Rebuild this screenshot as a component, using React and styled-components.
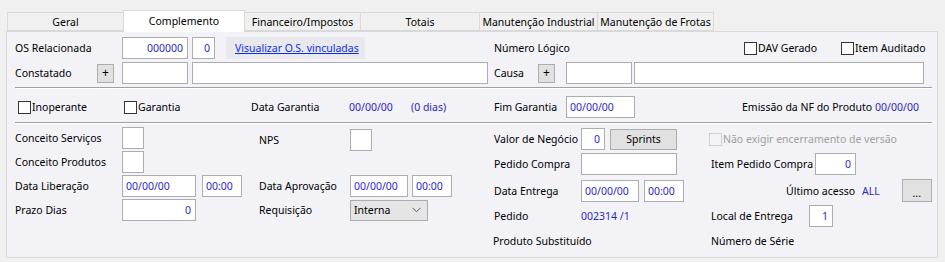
import styled, { createGlobalStyle } from 'styled-components'

const GlobalStyle = createGlobalStyle`
  body {
    margin: 0;
    background: #f0f0f0;
    font-family: 'Noto Sans', 'DejaVu Sans', sans-serif;
    font-size: 10.5px;
    color: #000;
  }
`

const StWindow = styled.div`
  width: 945px;
  height: 262px;
  box-sizing: border-box;
  padding: 10px 7px 4px 6px;
`

const StTabBar = styled.div`
  display: flex;
  align-items: flex-end;
  height: 21px;
  padding-left: 2px;
  position: relative;
  z-index: 1;
`

const StTab = styled.div`
  width: ${(p) => p.$w}px;
  height: ${(p) => (p.$active ? 22 : 19)}px;
  box-sizing: border-box;
  display: flex;
  align-items: center;
  justify-content: center;
  background: ${(p) => (p.$active ? '#fff' : '#f0f0f0')};
  border: 1px solid #d9d9d9;
  border-bottom: ${(p) => (p.$active ? 'none' : '1px solid #d9d9d9')};
  margin-left: -1px;
  margin-bottom: ${(p) => (p.$active ? -1 : 0)}px;
  padding-bottom: ${(p) => (p.$active ? 2 : 0)}px;
  white-space: nowrap;
`

const StPanel = styled.div`
  height: 227px;
  box-sizing: border-box;
  border: 1px solid #d9d9d9;
  background: #f2f2f7;
  padding: 5px 5px 0 8px;
`

const StRow = styled.div`
  display: flex;
  align-items: center;
  height: 22px;
  margin-top: ${(p) => p.$mt || 0}px;
`

const StHalf = styled.div`
  display: flex;
  align-items: center;
  width: ${(p) => (p.$w ? `${p.$w}px` : 'auto')};
  flex: ${(p) => (p.$w ? 'none' : 1)};
  height: 100%;
`

const StLabel = styled.span`
  display: inline-block;
  width: ${(p) => (p.$w ? `${p.$w}px` : 'auto')};
  flex: none;
  white-space: nowrap;
  color: #000;
  margin-left: ${(p) => p.$ml || 0}px;
`

const StValue = styled.span`
  display: inline-block;
  width: ${(p) => (p.$w ? `${p.$w}px` : 'auto')};
  flex: none;
  color: #2d1fc8;
  white-space: nowrap;
  margin-left: ${(p) => p.$ml || 0}px;
`

const StInput = styled.div`
  width: ${(p) => p.$w}px;
  height: ${(p) => p.$h || 22}px;
  box-sizing: border-box;
  flex: none;
  background: #fff;
  border: 1px solid #abadb3;
  color: #2d1fc8;
  display: flex;
  align-items: center;
  justify-content: ${(p) => (p.$right ? 'flex-end' : 'flex-start')};
  padding: 0 4px 0 3px;
  margin-left: ${(p) => p.$ml || 0}px;
  white-space: nowrap;
`

const StButton = styled.div`
  width: ${(p) => p.$w}px;
  height: ${(p) => p.$h || 21}px;
  box-sizing: border-box;
  flex: none;
  background: #e1e1e1;
  border: 1px solid #adadad;
  display: flex;
  align-items: ${(p) => (p.$low ? 'flex-end' : 'center')};
  justify-content: center;
  padding-bottom: ${(p) => (p.$low ? 3 : 0)}px;
  margin-left: ${(p) => p.$ml || 0}px;
  font-size: ${(p) => p.$fs || 10.5}px;
  line-height: 1;
`

const StLinkBox = styled.div`
  width: 139px;
  height: 22px;
  box-sizing: border-box;
  background: #e8e8ed;
  padding-left: 9px;
  display: flex;
  align-items: center;
  margin-left: 11px;
`

const StLink = styled.a`
  color: #0a2ee6;
  text-decoration: underline;
  white-space: nowrap;
`

const StCheck = styled.label`
  display: flex;
  align-items: center;
  white-space: nowrap;
  width: ${(p) => (p.$w ? `${p.$w}px` : 'auto')};
  flex: none;
  margin-left: ${(p) => p.$ml || 0}px;
  color: ${(p) => (p.$disabled ? '#a0a0a0' : '#000')};
`

const StBox = styled.span`
  width: 13px;
  height: 13px;
  box-sizing: border-box;
  border: 1px solid ${(p) => (p.$disabled ? '#cfcfcf' : '#333')};
  background: ${(p) => (p.$disabled ? '#f4f4f4' : '#fff')};
  margin-right: 1px;
`

const StSeparator = styled.div`
  border-top: 1px solid #a0a0a0;
  border-bottom: 1px solid #fff;
  margin: ${(p) => p.$my || 0}px 0;
`

const StGarantiaRow = styled.div`
  display: flex;
  align-items: center;
  height: 30px;
`

const StLower = styled.div`
  display: flex;
  padding-top: 3px;
`

const StLeftGrid = styled.div`
  width: 479px;
  flex: none;
  display: grid;
  grid-template-columns: 107px 137px 91px 1fr;
  grid-auto-rows: 24px;
  align-items: start;
`

const StCell = styled.div`
  display: flex;
  align-items: center;
  gap: ${(p) => p.$gap || 0}px;
  height: 22px;
  margin-top: ${(p) => p.$mt || 0}px;
`

const StRightCol = styled.div`
  flex: 1;
  display: flex;
  flex-direction: column;
`

const StRightRow = styled.div`
  display: flex;
  height: ${(p) => p.$h}px;
`

const StSelect = styled.div`
  width: 78px;
  height: 21px;
  box-sizing: border-box;
  background: #e5e5e5;
  border: 1px solid #acacac;
  display: flex;
  align-items: center;
  justify-content: space-between;
  padding: 0 6px 0 3px;
`

const tabs = [
  ['Geral', 117],
  ['Complemento', 122],
  ['Financeiro/Impostos', 117],
  ['Totais', 120],
  ['Manutenção Industrial', 119],
  ['Manutenção de Frotas', 117],
]

function Check({ children, disabled, ...rest }) {
  return (
    <StCheck $disabled={disabled} {...rest}>
      <StBox $disabled={disabled} />
      {children}
    </StCheck>
  )
}

export default function App() {
  return (
    <>
      <GlobalStyle />
      <StWindow>
        <StTabBar>
          {tabs.map(([name, w]) => (
            <StTab key={name} $w={w} $active={name === 'Complemento'}>
              {name}
            </StTab>
          ))}
        </StTabBar>
        <StPanel>
          <StRow>
            <StHalf $w={479}>
              <StLabel $w={107}>OS Relacionada</StLabel>
              <StInput $w={66} $right>000000</StInput>
              <StInput $w={23} $right $ml={4}>0</StInput>
              <StLinkBox>
                <StLink>Visualizar O.S. vinculadas</StLink>
              </StLinkBox>
            </StHalf>
            <StHalf>
              <StLabel $w={250}>Número Lógico</StLabel>
              <Check $w={97}>DAV Gerado</Check>
              <Check>Item Auditado</Check>
            </StHalf>
          </StRow>
          <StRow $mt={3}>
            <StHalf $w={479}>
              <StLabel $w={82}>Constatado</StLabel>
              <StButton $w={17} $h={19} $fs={12}>+</StButton>
              <StInput $w={66} $ml={8} />
              <StInput $w={296} $ml={4} />
            </StHalf>
            <StHalf>
              <StLabel $w={44}>Causa</StLabel>
              <StButton $w={17} $h={19} $fs={12}>+</StButton>
              <StInput $w={66} $ml={11} />
              <StInput $w={290} $ml={2} />
            </StHalf>
          </StRow>
          <StSeparator $my={3} />
          <StGarantiaRow>
            <Check $w={106} $ml={3}>Inoperante</Check>
            <Check $w={127}>Garantia</Check>
            <StLabel $w={98}>Data Garantia</StLabel>
            <StValue $w={62}>00/00/00</StValue>
            <StValue $w={83}>(0 dias)</StValue>
            <StLabel $w={72}>Fim Garantia</StLabel>
            <StInput $w={69}>00/00/00</StInput>
            <StLabel $ml={107}>Emissão da NF do Produto</StLabel>
            <StValue $ml={3}>00/00/00</StValue>
          </StGarantiaRow>
          <StSeparator />
          <StLower>
            <StLeftGrid>
              <StCell><StLabel>Conceito Serviços</StLabel></StCell>
              <StCell><StInput $w={22} /></StCell>
              <StCell $mt={2}><StLabel>NPS</StLabel></StCell>
              <StCell $mt={2}><StInput $w={22} /></StCell>

              <StCell><StLabel>Conceito Produtos</StLabel></StCell>
              <StCell><StInput $w={22} /></StCell>
              <StCell />
              <StCell />

              <StCell><StLabel>Data Liberação</StLabel></StCell>
              <StCell $gap={6}>
                <StInput $w={74}>00/00/00</StInput>
                <StInput $w={40}>00:00</StInput>
              </StCell>
              <StCell><StLabel>Data Aprovação</StLabel></StCell>
              <StCell $gap={4}>
                <StInput $w={58}>00/00/00</StInput>
                <StInput $w={40}>00:00</StInput>
              </StCell>

              <StCell><StLabel>Prazo Dias</StLabel></StCell>
              <StCell><StInput $w={74} $right>0</StInput></StCell>
              <StCell><StLabel>Requisição</StLabel></StCell>
              <StCell>
                <StSelect>
                  Interna
                  <svg width="9" height="6" viewBox="0 0 9 6">
                    <path d="M0.5 0.8 L4.5 4.8 L8.5 0.8" fill="none" stroke="#555" strokeWidth="1" />
                  </svg>
                </StSelect>
              </StCell>
            </StLeftGrid>
            <StRightCol>
              <StRightRow $h={24}>
                <StHalf $w={217}>
                  <StLabel $w={87}>Valor de Negócio</StLabel>
                  <StInput $w={24} $right>0</StInput>
                  <StButton $w={67} $ml={5}>Sprints</StButton>
                </StHalf>
                <StHalf>
                  <Check disabled $ml={-2}>Não exigir encerramento de versão</Check>
                </StHalf>
              </StRightRow>
              <StRightRow $h={26}>
                <StHalf $w={217}>
                  <StLabel $w={87}>Pedido Compra</StLabel>
                  <StInput $w={96} />
                </StHalf>
                <StHalf>
                  <StLabel $w={104}>Item Pedido Compra</StLabel>
                  <StInput $w={41} $right>0</StInput>
                </StHalf>
              </StRightRow>
              <StRightRow $h={27}>
                <StHalf $w={217}>
                  <StLabel $w={87}>Data Entrega</StLabel>
                  <StInput $w={58}>00/00/00</StInput>
                  <StInput $w={40} $ml={5}>00:00</StInput>
                </StHalf>
                <StHalf>
                  <StLabel $ml={75}>Último acesso</StLabel>
                  <StValue $ml={7}>ALL</StValue>
                  <StButton $w={30} $h={23} $ml={22} $low>...</StButton>
                </StHalf>
              </StRightRow>
              <StRightRow $h={24}>
                <StHalf $w={217}>
                  <StLabel $w={87}>Pedido</StLabel>
                  <StValue>002314 /1</StValue>
                </StHalf>
                <StHalf>
                  <StLabel $w={98}>Local de Entrega</StLabel>
                  <StInput $w={24} $right>1</StInput>
                </StHalf>
              </StRightRow>
              <StRightRow $h={26}>
                <StHalf $w={217}>
                  <StLabel $ml={-1}>Produto Substituído</StLabel>
                </StHalf>
                <StHalf>
                  <StLabel>Número de Série</StLabel>
                </StHalf>
              </StRightRow>
            </StRightCol>
          </StLower>
        </StPanel>
      </StWindow>
    </>
  )
}
